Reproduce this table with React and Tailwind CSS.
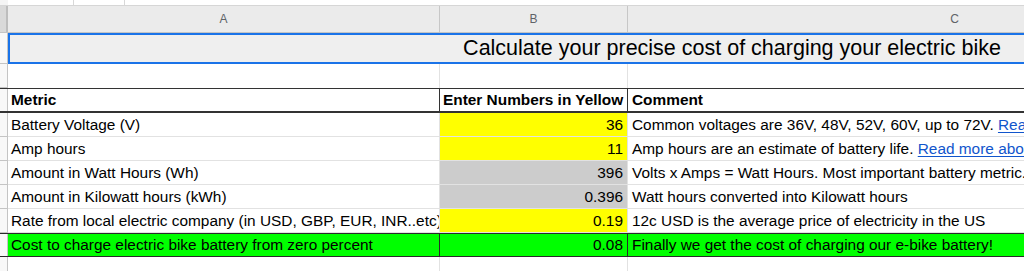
import React from "react";

const font = { fontFamily: '"Liberation Sans", Arial, sans-serif' };

function RowHead({ h, dark }) {
  return (
    <div
      className={`w-[8px] shrink-0 border-r border-b border-[#c4c4c4] ${dark ? "bg-[#dcdcdc]" : "bg-[#f8f8f8]"}`}
      style={{ height: h }}
    />
  );
}

function DataRow({ a, b, bBg, c, green }) {
  const rowBg = green ? "bg-[#00ff00]" : "bg-white";
  return (
    <div className={`flex h-[24px] w-[1282px] ${green ? "border-t border-b border-[#2a2a2a]" : ""}`}>
      <div className={`w-[8px] shrink-0 bg-[#f8f8f8] border-r border-[#c4c4c4] ${green ? "" : "border-b"}`} />
      <div
        className={`w-[432px] shrink-0 flex items-center pl-[3px] overflow-hidden whitespace-nowrap text-[15.4px] text-black ${rowBg} ${green ? "border-r border-[#2a2a2a]" : "border-r border-b border-[#e2e2e2]"}`}
      >
        {a}
      </div>
      <div
        className={`w-[188px] shrink-0 flex items-center justify-end pr-[4px] overflow-hidden whitespace-nowrap text-[15.4px] text-black ${bBg} ${green ? "border-r border-[#2a2a2a]" : "border-r border-b border-[#e2e2e2]"}`}
      >
        {b}
      </div>
      <div
        className={`w-[654px] shrink-0 flex items-center pl-[4px] overflow-hidden whitespace-nowrap text-[15.4px] text-black ${rowBg} ${green ? "" : "border-r border-b border-[#e2e2e2]"}`}
      >
        {c}
      </div>
    </div>
  );
}

const Link = ({ children }) => (
  <span className="text-[#1155cc] underline underline-offset-2">{children}</span>
);

export default function App() {
  return (
    <div className="w-[1024px] h-[271px] overflow-hidden bg-white" style={font}>
      {/* top strip */}
      <div className="h-[6px] w-full bg-white border-b border-[#d6d6d6] flex">
        <div className="w-[8px] h-full bg-[#f4f4f4]" />
        <div className="ml-[65px] w-px h-[5px] bg-[#d8d8d8]" />
        <div className="ml-[50px] w-px h-[5px] bg-[#d8d8d8]" />
      </div>
      {/* column header */}
      <div className="flex h-[27px] w-[1282px] bg-[#ebebeb] border-b border-[#c4c4c4]">
        <div className="w-[8px] shrink-0 bg-[#d9d9d9] border-r-[2px] border-[#bdbdbd]" />
        <div className="w-[432px] shrink-0 flex items-center justify-center text-[12px] text-[#5f6368] border-r border-[#c7c7c7]">A</div>
        <div className="w-[188px] shrink-0 flex items-center justify-center text-[12px] text-[#5f6368] border-r border-[#c7c7c7]">B</div>
        <div className="w-[654px] shrink-0 flex items-center justify-center text-[12px] text-[#5f6368] border-r border-[#c7c7c7]">C</div>
      </div>
      {/* title row */}
      <div className="flex h-[31px] w-[1456px]">
        <RowHead h={31} />
        <div className="w-[1448px] shrink-0 flex items-center justify-center bg-[#efefef] border-2 border-[#1a73e8] text-[21.5px] text-black whitespace-nowrap">
          Calculate your precise cost of charging your electric bike
        </div>
      </div>
      {/* empty row */}
      <div className="flex h-[24px] w-[1282px]">
        <RowHead h={24} />
        <div className="w-[432px] shrink-0 border-r border-[#e2e2e2]" />
        <div className="w-[188px] shrink-0 border-r border-[#e2e2e2]" />
        <div className="w-[654px] shrink-0" />
      </div>
      {/* header row */}
      <div className="flex h-[25px] w-[1282px] border-t border-b-2 border-[#333333]">
        <div className="w-[8px] shrink-0 bg-[#f8f8f8] border-r border-[#c4c4c4]" />
        <div className="w-[432px] shrink-0 flex items-center pl-[3px] font-bold text-[15.4px] text-black border-r border-[#333333]">Metric</div>
        <div className="w-[188px] shrink-0 flex items-center pl-[3px] font-bold text-[15.4px] text-black whitespace-nowrap overflow-hidden border-r border-[#333333]">Enter Numbers in Yellow</div>
        <div className="w-[654px] shrink-0 flex items-center pl-[4px] font-bold text-[15.4px] text-black">Comment</div>
      </div>
      <DataRow
        a="Battery Voltage (V)"
        b="36"
        bBg="bg-[#ffff00]"
        c={<>Common voltages are 36V, 48V, 52V, 60V, up to 72V.&nbsp;<Link>Read more about battery voltage</Link></>}
      />
      <DataRow
        a="Amp hours"
        b="11"
        bBg="bg-[#ffff00]"
        c={<>Amp hours are an estimate of battery life.&nbsp;<Link>Read more about amp hours</Link></>}
      />
      <DataRow
        a="Amount in Watt Hours (Wh)"
        b="396"
        bBg="bg-[#cccccc]"
        c="Volts x Amps = Watt Hours. Most important battery metric."
      />
      <DataRow
        a="Amount in Kilowatt hours (kWh)"
        b="0.396"
        bBg="bg-[#cccccc]"
        c="Watt hours converted into Kilowatt hours"
      />
      <DataRow
        a="Rate from local electric company (in USD, GBP, EUR, INR..etc)"
        b="0.19"
        bBg="bg-[#ffff00]"
        c="12c USD is the average price of electricity in the US"
      />
      <DataRow
        a="Cost to charge electric bike battery from zero percent"
        b="0.08"
        bBg="bg-[#00ff00]"
        c="Finally we get the cost of charging our e-bike battery!"
        green
      />
      <div className="flex h-[24px] w-[1282px]">
        <RowHead h={24} />
        <div className="w-[432px] shrink-0 border-r border-b border-[#e2e2e2]" />
        <div className="w-[188px] shrink-0 border-r border-b border-[#e2e2e2]" />
        <div className="w-[654px] shrink-0 border-b border-[#e2e2e2]" />
      </div>
    </div>
  );
}
